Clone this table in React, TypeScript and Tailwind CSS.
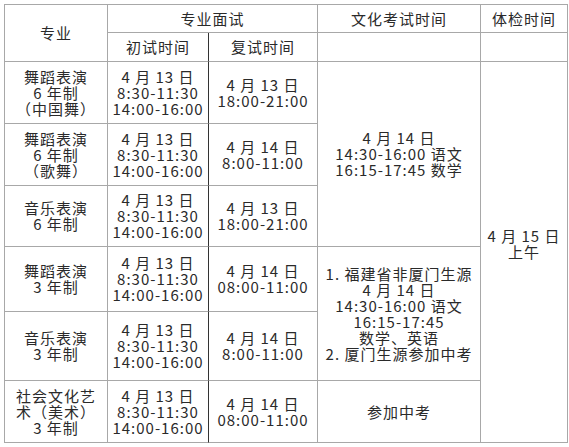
import React from "react";

const cell =
  "flex flex-col items-center justify-center text-center border-r border-b border-[#a8a8a8] leading-[16px]";
const dark = "border-r-[#333333]";

function Lines({ lines }: { lines: string[] }) {
  return (
    <>
      {lines.map((l, i) => (
        <div key={i} className="whitespace-pre">
          {l}
        </div>
      ))}
    </>
  );
}

const rows: { major: string[]; first: string[]; second: string[] }[] = [
  {
    major: ["舞蹈表演", "6 年制", "（中国舞）"],
    first: ["4 月 13 日", "8:30-11:30", "14:00-16:00"],
    second: ["4 月 13 日", "18:00-21:00"],
  },
  {
    major: ["舞蹈表演", "6 年制", "（歌舞）"],
    first: ["4 月 13 日", "8:30-11:30", "14:00-16:00"],
    second: ["4 月 14 日", "8:00-11:00"],
  },
  {
    major: ["音乐表演", "6 年制"],
    first: ["4 月 13 日", "8:30-11:30", "14:00-16:00"],
    second: ["4 月 13 日", "18:00-21:00"],
  },
  {
    major: ["舞蹈表演", "3 年制"],
    first: ["4 月 13 日", "8:30-11:30", "14:00-16:00"],
    second: ["4 月 14 日", "08:00-11:00"],
  },
  {
    major: ["音乐表演", "3 年制"],
    first: ["4 月 13 日", "8:30-11:30", "14:00-16:00"],
    second: ["4 月 14 日", "8:00-11:00"],
  },
  {
    major: ["社会文化艺", "术（美术）", "3 年制"],
    first: ["4 月 13 日", "8:30-11:30", "14:00-16:00"],
    second: ["4 月 14 日", "08:00-11:00"],
  },
];

const rowStart = [
  "row-start-3",
  "row-start-4",
  "row-start-5",
  "row-start-6",
  "row-start-7",
  "row-start-8",
];

export default function App() {
  return (
    <div className="w-[569px] h-[447px] bg-white pt-[4px] pl-[4px]">
      <div
        className="grid grid-cols-[103px_101px_109px_163px_87px] grid-rows-[28px_29px_62px_62px_61px_65px_69px_62px] border-t border-l border-[#a8a8a8] w-max text-[15px] tracking-[1px] text-[#2a2a2a]"
        style={{ fontFamily: '"Noto Sans CJK SC", "Noto Sans", sans-serif' }}
      >
        <div className={`${cell} col-start-1 row-start-1 row-span-2`}>专业</div>
        <div className={`${cell} col-start-2 col-span-2 row-start-1`}>专业面试</div>
        <div className={`${cell} col-start-4 row-start-1`}>文化考试时间</div>
        <div className={`${cell} col-start-5 row-start-1`}>体检时间</div>
        <div className={`${cell} ${dark} col-start-2 row-start-2`}>初试时间</div>
        <div className={`${cell} col-start-3 row-start-2`}>复试时间</div>
        <div className={`${cell} col-start-4 row-start-2`}></div>
        <div className={`${cell} col-start-5 row-start-2`}></div>

        {rows.map((r, i) => (
          <React.Fragment key={i}>
            <div className={`${cell} col-start-1 ${rowStart[i]}`}>
              <Lines lines={r.major} />
            </div>
            <div className={`${cell} ${dark} col-start-2 ${rowStart[i]}`}>
              <Lines lines={r.first} />
            </div>
            <div className={`${cell} col-start-3 ${rowStart[i]}`}>
              <Lines lines={r.second} />
            </div>
          </React.Fragment>
        ))}

        <div className={`${cell} col-start-4 row-start-3 row-span-3`}>
          <Lines lines={["4 月 14 日", "14:30-16:00 语文", "16:15-17:45 数学"]} />
        </div>
        <div className={`${cell} col-start-4 row-start-6 row-span-2`}>
          <Lines
            lines={[
              "1. 福建省非厦门生源",
              "4 月 14 日",
              "14:30-16:00 语文",
              "16:15-17:45",
              "数学、英语",
              "2. 厦门生源参加中考",
            ]}
          />
        </div>
        <div className={`${cell} col-start-4 row-start-8`}>参加中考</div>
        <div className={`${cell} col-start-5 row-start-3 row-span-6 pb-[16px]`}>
          <Lines lines={["4 月 15 日", "上午"]} />
        </div>
      </div>
    </div>
  );
}
